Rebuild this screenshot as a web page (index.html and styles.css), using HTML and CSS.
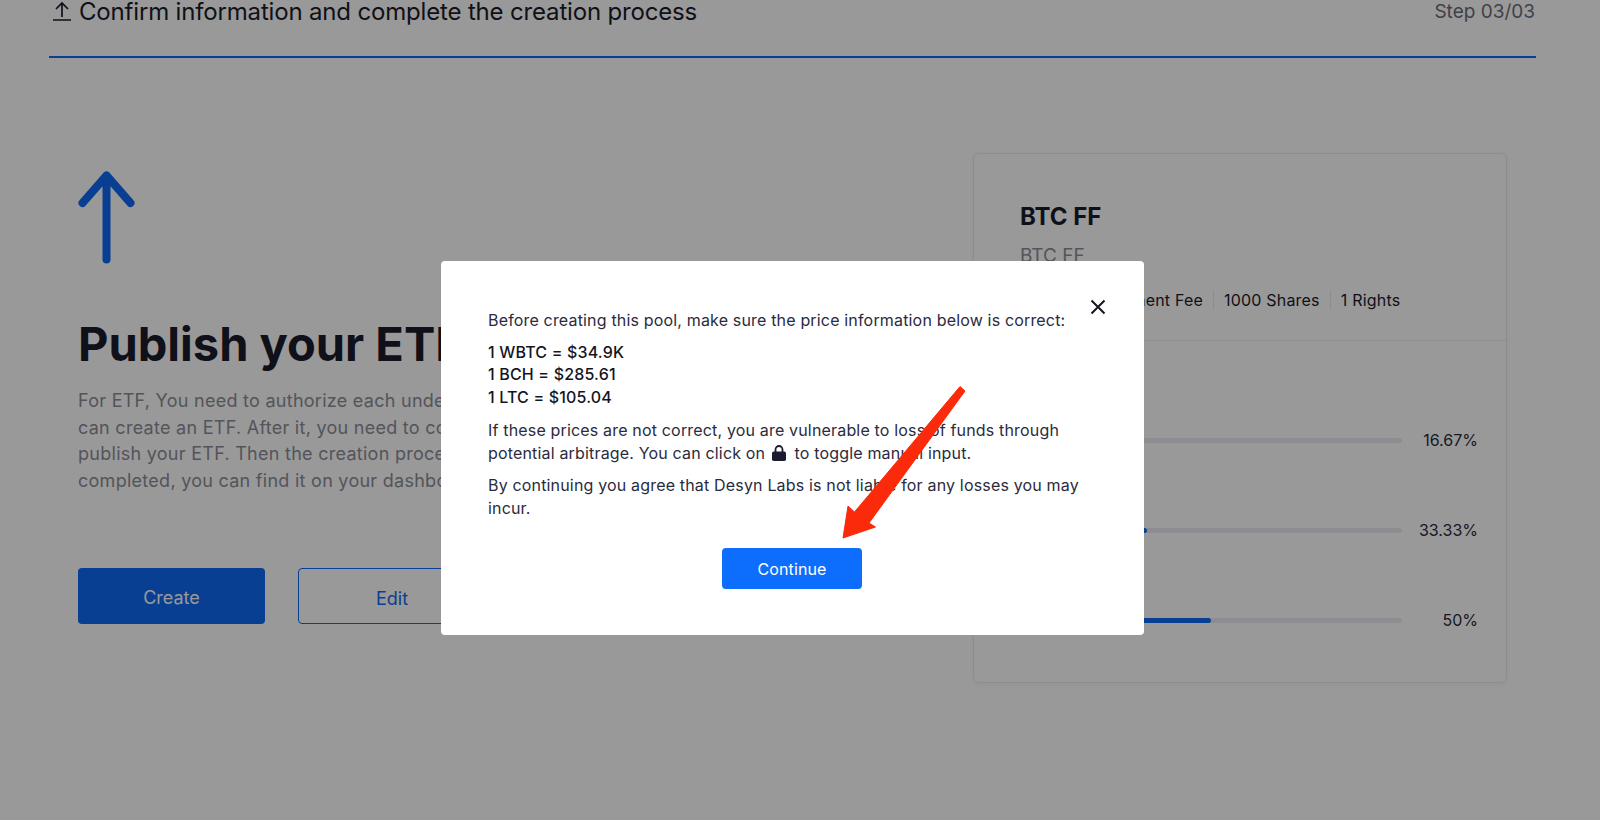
FILE: index.html
```html
<!DOCTYPE html>
<html>
    <head>
        <meta charset="UTF-8" />
        <title>Publish your ETF</title>
        <link rel="stylesheet" href="styles.css">
    </head>
    <body>
        <div class="page">
            <div class="step-head">
                <div class="step-title">
                    <svg class="step-icon" viewBox="0 0 20 20" width="20" height="20">
                        <path d="M10 16V2M4 8l6-6 6 6M1 19h18" fill="none" stroke="#1a1b2a" stroke-width="1.7"/>
                    </svg>
                    <span>Confirm information and complete the creation process</span>
                </div>
                <span class="step-count">Step 03/03</span>
            </div>

            <div class="main">
                <div class="intro">
                    <svg class="intro-arrow" viewBox="0 0 57 93" width="57" height="93">
                        <path d="M28.5 4.5V88.5M4.500 32L28.500 4.500L52.500 32" fill="none" stroke="#1069f5" stroke-width="8" stroke-linecap="round" stroke-linejoin="round"/>
                    </svg>
                    <h1>Publish your ETF</h1>
                    <p class="intro-text">
                        For ETF, You need to authorize each underlying token before you<br>
                        can create an ETF. After it, you need to confirm the information and<br>
                        publish your ETF. Then the creation process starts. Once it is<br>
                        completed, you can find it on your dashboard.
                    </p>
                    <div class="intro-actions">
                        <button class="btn btn-solid">Create</button>
                        <button class="btn btn-line">Edit</button>
                    </div>
                </div>

                <div class="card">
                    <div class="card-top">
                        <h2>BTC FF</h2>
                        <p class="card-sub">BTC FF</p>
                        <div class="stats">
                            <span>0.0% Management Fee</span>
                            <span>1000 Shares</span>
                            <span>1 Rights</span>
                        </div>
                    </div>
                    <div class="card-rows">
                        <div class="row">
                            <p class="row-name">LTC</p>
                            <div class="row-line">
                                <div class="track"><div class="fill" style="width: 16.67%"></div></div>
                                <span class="pct">16.67%</span>
                            </div>
                        </div>
                        <div class="row">
                            <p class="row-name">BCH</p>
                            <div class="row-line">
                                <div class="track"><div class="fill" style="width: 33.33%"></div></div>
                                <span class="pct">33.33%</span>
                            </div>
                        </div>
                        <div class="row">
                            <p class="row-name">WBTC</p>
                            <div class="row-line">
                                <div class="track"><div class="fill" style="width: 50%"></div></div>
                                <span class="pct">50%</span>
                            </div>
                        </div>
                    </div>
                </div>
            </div>
        </div>

        <div class="overlay">
            <div class="modal">
                <svg class="modal-close" viewBox="0 0 16 16" width="16" height="16">
                    <path d="M1.500 1.500L14.500 14.500M14.500 1.500L1.500 14.500" fill="none" stroke="#14151f" stroke-width="2"/>
                </svg>
                <p>Before creating this pool, make sure the price information below is correct:</p>
                <div class="prices">
                    <div>1 WBTC = $34.9K</div>
                    <div>1 BCH = $285.61</div>
                    <div>1 LTC = $105.04</div>
                </div>
                <p>If these prices are not correct, you are vulnerable to loss of funds through potential arbitrage. You can click on
                    <svg class="lock" viewBox="0 0 14 16" width="14" height="16">
                        <path d="M3.500 7V4.500a3.500 3.500 0 0 1 7 0V7" fill="none" stroke="#1a1b2f" stroke-width="1.800"/>
                        <rect x="0" y="6.500" width="14" height="9.500" rx="1.800" fill="#1a1b2f"/>
                    </svg>
                    to toggle manual input.</p>
                <p>By continuing you agree that Desyn Labs is not liable for any losses you may incur.</p>
                <div class="modal-actions">
                    <button class="modal-btn">Continue</button>
                </div>
            </div>
        </div>

        <svg class="callout" viewBox="0 0 1600 820" width="1600" height="820">
            <path d="M960 386.500L965 391L869 523L875.500 527L843 538L848 506L854.500 512Z" fill="#fb2a0a" stroke="#fb2a0a" stroke-width="1" stroke-linejoin="round"/>
        </svg>
    </body>
</html>
```

FILE: styles.css
```css
* {
  margin: 0;
  padding: 0;
  box-sizing: border-box;
  font-family: Inter, "Liberation Sans", sans-serif;
}

html, body {
  width: 100%;
  height: 100%;
  overflow: hidden;
  background: #fff;
}

.page {
  padding: 0 64px 0 49px;
  color: #1a1b2a;
}

.step-head {
  display: flex;
  justify-content: space-between;
  height: 58px;
  border-bottom: 2px solid #1069f5;
}

.step-title {
  display: flex;
  align-items: flex-start;
  gap: 7px;
  padding-left: 3px;
  font-size: 24px;
  line-height: 24px;
  letter-spacing: -0.17px;
}

.step-icon {
  margin-top: 1px;
}

.step-count {
  font-size: 19px;
  line-height: 24px;
  color: #6c6d78;
  padding-right: 1px;
}

.main {
  display: flex;
  justify-content: space-between;
  padding: 95px 29px 0 29px;
}

.intro {
  padding-top: 18px;
}

.intro-arrow {
  display: block;
}

.intro h1 {
  margin-top: 52px;
  font-size: 47px;
  line-height: 56px;
  font-weight: 700;
}

.intro-text {
  margin-top: 16px;
  font-size: 18px;
  line-height: 26.600px;
  letter-spacing: 0.27px;
  color: #8c8d98;
  white-space: nowrap;
}

.intro-actions {
  display: flex;
  gap: 33px;
  margin-top: 74px;
}

.btn {
  width: 187px;
  height: 56px;
  padding-top: 3px;
  border-radius: 4px;
  font-size: 18px;
  cursor: pointer;
}

.btn-solid {
  background: #1069f5;
  border: 0;
  color: #fff;
}

.btn-line {
  width: 188px;
  padding-top: 5px;
  background: #fff;
  border: 1px solid #1069f5;
  color: #1069f5;
}

.card {
  width: 534px;
  height: 530px;
  border: 1px solid #ececf0;
  border-radius: 6px;
  box-shadow: 0 1px 4px rgba(0, 0, 0, 0.05);
}

.card-top {
  height: 187px;
  padding: 48px 28px 0 46px;
  border-bottom: 1px solid #ececf0;
}

.card h2 {
  font-size: 24px;
  line-height: 30px;
  font-weight: 700;
}

.card-sub {
  margin-top: 10px;
  font-size: 19px;
  line-height: 28px;
  color: #8c8d98;
}

.stats {
  display: flex;
  margin-top: 20px;
  padding-left: 4px;
  font-size: 16px;
  line-height: 20px;
  letter-spacing: 0.2px;
}

.stats span {
  padding-right: 10px;
  margin-right: 10px;
  border-right: 1px solid #ececf0;
}

.stats span:last-child {
  border-right: 0;
}

.card-rows {
  padding: 63px 28px 0 46px;
}

.row {
  height: 90px;
}

.row-name {
  font-size: 16px;
  line-height: 24px;
}

.row-line {
  display: flex;
  align-items: center;
  justify-content: space-between;
  height: 24px;
}

.track {
  width: 382px;
  height: 5px;
  border-radius: 3px;
  background: #ececf2;
}

.fill {
  height: 100%;
  border-radius: 3px;
  background: #1069f5;
}

.pct {
  font-size: 16px;
  color: #2a2b3d;
}

.overlay {
  position: fixed;
  top: 0;
  left: 0;
  width: 100%;
  height: 100%;
  padding: 261px 0 0 441px;
  background: rgba(0, 0, 0, 0.4);
}

.modal {
  position: relative;
  width: 703px;
  height: 374px;
  padding: 48px 47px;
  border-radius: 4px;
  background: #fff;
  color: #2a2b3d;
  font-size: 16px;
  line-height: 23.500px;
  letter-spacing: 0.17px;
}

.modal p {
  margin-bottom: 8px;
}

.prices {
  margin-bottom: 10px;
  line-height: 22.800px;
  font-weight: 500;
  color: #14151f;
}

.modal-close {
  position: absolute;
  top: 38px;
  right: 38px;
}

.lock {
  margin: 0 4px 0 2px;
  vertical-align: -2px;
}

.modal-actions {
  display: flex;
  justify-content: center;
  margin-top: 27px;
  padding-right: 1px;
}

.modal-btn {
  width: 140px;
  height: 41px;
  padding-top: 2px;
  border: 0;
  border-radius: 4px;
  background: #0d6efd;
  color: #fff;
  font-size: 16px;
  letter-spacing: 0.1px;
  cursor: pointer;
}

.callout {
  position: fixed;
  top: 0;
  left: 0;
  pointer-events: none;
}
```
